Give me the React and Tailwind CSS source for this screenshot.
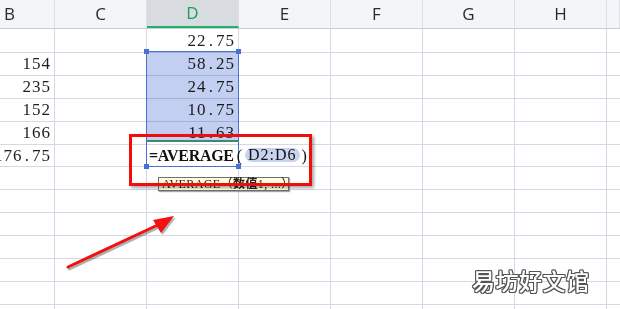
const headers = ['B', 'C', 'D', 'E', 'F', 'G', 'H', ''];

const data = [
  ['', '22.75'],
  ['154', '58.25'],
  ['235', '24.75'],
  ['152', '10.75'],
  ['166', '11.63'],
  ['176.75', 'formula'],
  ['', ''], ['', ''], ['', ''], ['', ''], ['', ''], ['', ''], ['', ''],
];

// SimSun-like spacing: the dot takes a full digit cell
function Num({ value }) {
  return (
    <span className="whitespace-nowrap">
      {value.split('').map((ch, i) =>
        ch === '.' ? (
          <span key={i} className="inline-block w-[9.5px] text-center">.</span>
        ) : (
          <span key={i}>{ch}</span>
        )
      )}
    </span>
  );
}

function Formula() {
  return (
    <div className="absolute left-[2px] top-0 z-10 flex items-center h-[22px] whitespace-nowrap font-['Liberation_Serif'] text-[16px] tracking-normal text-[#111]">
      <span className="font-bold tracking-[-0.3px]">=AVERAGE</span>
      <span className="ml-[3px] mr-[3px]">(</span>
      <span className="rounded-full bg-[#c8d3ef] px-[3px] tracking-[1px] leading-[14px]">D2:D6</span>
      <span className="ml-[2px]">)</span>
    </div>
  );
}

export default function App() {
  return (
    <div className="relative w-[620px] h-[309px] overflow-hidden bg-white">
      {/* column headers */}
      <div className="grid grid-cols-[55px_92px_92px_92px_92px_92px_92px_1fr] h-[29px] border-b border-[#c9cdd8] bg-[#f4f5f8] font-['Open_Sans',sans-serif] text-[17px] text-[#2b2b2b]">
        {headers.map((h, i) => (
          <div
            key={i}
            className={
              'flex items-center border-r border-[#dcdfe6] ' +
              (i === 0 ? 'pl-[4px] ' : 'justify-center ') +
              (h === 'D' ? 'bg-[#d8dbe0] text-[#1f9d5c] border-b-2 border-b-[#21b26a]' : '')
            }
          >
            {h}
          </div>
        ))}
      </div>

      {/* rows */}
      {data.map(([b, d], r) => (
        <div key={r} className="grid grid-cols-[55px_92px_92px_92px_92px_92px_92px_1fr] h-[23px]">
          <div className="relative overflow-hidden flex justify-end pr-[3px] border-r border-b border-[#d5d9e5] font-['Liberation_Serif'] text-[17px] tracking-[1px] text-[#1f1f1f] leading-[23px]">
            <Num value={b} />
          </div>
          <div className="border-r border-b border-[#d5d9e5]" />
          <div className="relative flex justify-end pr-[3px] border-r border-b border-[#d5d9e5] font-['Liberation_Serif'] text-[17px] tracking-[1px] text-[#1f1f1f] leading-[23px]">
            {d === 'formula' ? <Formula /> : <Num value={d} />}
          </div>
          <div className="border-r border-b border-[#d5d9e5]" />
          <div className="border-r border-b border-[#d5d9e5]" />
          <div className="border-r border-b border-[#d5d9e5]" />
          <div className="border-r border-b border-[#d5d9e5]" />
          <div className="border-b border-[#d5d9e5]" />
        </div>
      ))}

      {/* selection D2:D6 */}
      <div className="absolute left-[146px] top-[51px] w-[93px] h-[116px] border border-[#4a70d3] pointer-events-none">
        <div className="h-[88px] bg-[#c3cff0] mix-blend-multiply" />
        <div className="h-[2px] bg-[#3b8a7a]" />
        <div className="absolute -left-[3px] -top-[3px] w-[5px] h-[5px] bg-[#4a70d3]" />
        <div className="absolute -right-[3px] -top-[3px] w-[5px] h-[5px] bg-[#4a70d3]" />
        <div className="absolute -left-[3px] -bottom-[3px] w-[5px] h-[5px] bg-[#4a70d3]" />
        <div className="absolute -right-[3px] -bottom-[3px] w-[5px] h-[5px] bg-[#4a70d3]" />
      </div>

      {/* tooltip */}
      <div className="absolute left-[158px] top-[177px] w-[131px] h-[14px] z-20 bg-[#ffffe1] border border-[#6f6f6f] shadow-[1px_1px_1px_rgba(0,0,0,0.35)] flex items-center pl-[3px] whitespace-nowrap font-['Liberation_Serif','Noto_Sans_CJK_SC',serif] text-[12px] tracking-[0.4px] leading-none text-[#222]">
        AVERAGE（<b>数值</b>1, ...）
      </div>

      {/* red highlight box */}
      <div className="absolute left-[129px] top-[134px] w-[183px] h-[52px] z-30 border-[3px] border-[#f20d0d] shadow-[2px_2px_3px_rgba(0,0,0,0.35)]" />

      {/* arrow */}
      <svg className="absolute left-0 top-0 z-30" width="620" height="309" viewBox="0 0 620 309">
        <g transform="translate(1.5 2)" opacity="0.3">
          <line x1="68" y1="267" x2="162" y2="223" stroke="#000" strokeWidth="3" strokeLinecap="round" />
          <polygon points="174,216 153,220 161,233" fill="#000" />
        </g>
        <line x1="68" y1="267" x2="162" y2="223" stroke="#f21010" strokeWidth="3" strokeLinecap="round" />
        <polygon points="174,216 153,220 161,233" fill="#f21010" />
      </svg>

      {/* watermark */}
      <div className="absolute left-[472px] top-[266px] z-30 font-['Noto_Sans_CJK_SC',sans-serif] font-medium text-[23px] leading-[28px] tracking-[0.5px] text-white [text-shadow:1px_0_#555,-1px_0_#555,0_1px_#555,0_-1px_#555,1px_1px_#555,-1px_-1px_#555,1px_-1px_#555,-1px_1px_#555]">
        易坊好文馆
      </div>
    </div>
  );
}
